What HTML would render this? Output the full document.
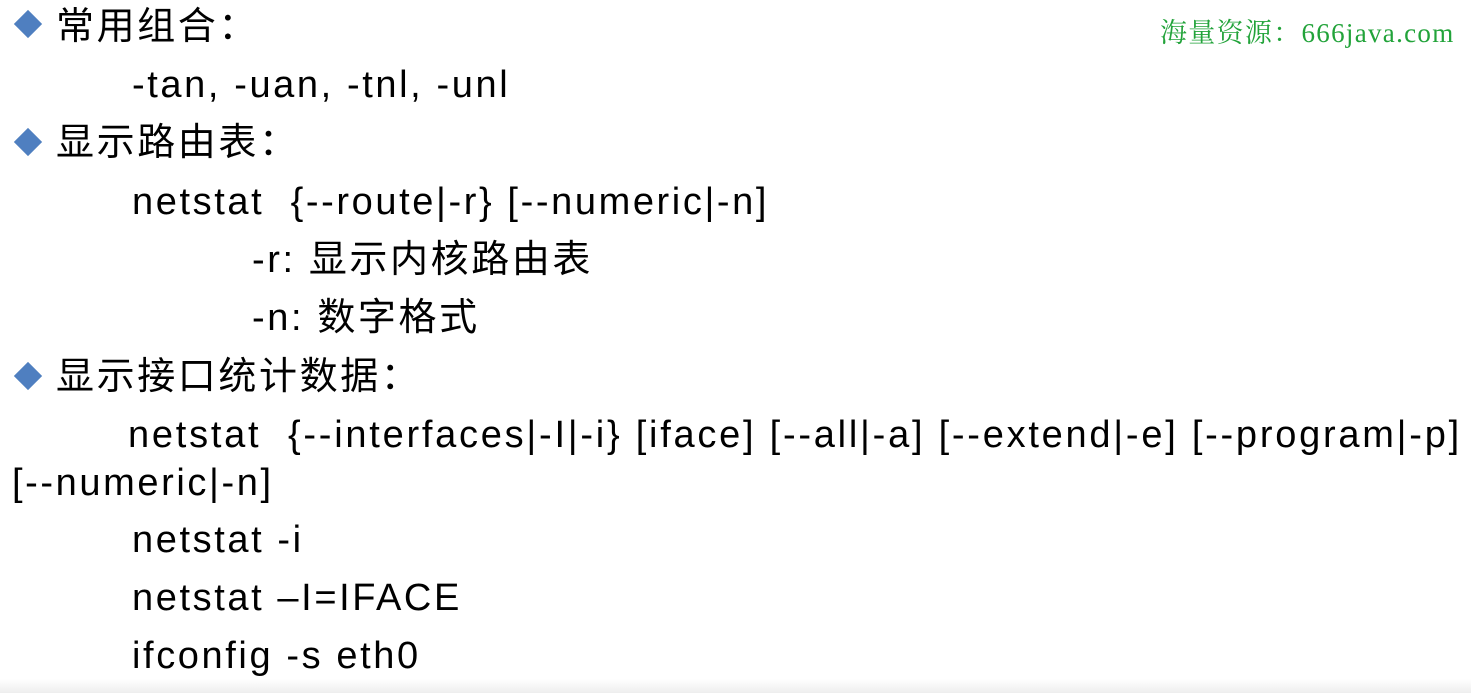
<!DOCTYPE html>
<html><head><meta charset="utf-8"><style>
body{margin:0;width:1471px;height:693px;background:#fff;overflow:hidden;position:relative;font-family:"Liberation Sans","Noto Sans CJK SC",sans-serif;color:#000}
.l{position:absolute;font-size:38px;line-height:40px;white-space:nowrap;letter-spacing:2.6px}
.c{font-size:38px;letter-spacing:2.6px}
.d{position:absolute;width:20px;height:20px;background:#4f7fc0;transform:rotate(45deg)}
.w{position:absolute;left:1160px;top:11px;font-family:"Liberation Serif","Noto Serif CJK SC",serif;color:#22a33a;font-size:27px;letter-spacing:1.3px}
.b{position:absolute;left:0;right:0;bottom:0;height:14px;background:linear-gradient(#fff,#eee)}
</style></head><body>
<div class="d" style="left:18px;top:14px"></div>
<div class="l c" style="left:56px;top:7px">常用组合：</div>
<div class="l" style="left:132px;top:65px">-tan, -uan, -tnl, -unl</div>
<div class="d" style="left:18px;top:132px"></div>
<div class="l c" style="left:56px;top:123px">显示路由表：</div>
<div class="l" style="left:132px;top:182px">netstat&nbsp; {--route|-r} [--numeric|-n]</div>
<div class="l" style="left:252px;top:240px">-r: <span class="c">显示内核路由表</span></div>
<div class="l" style="left:252px;top:298px">-n: <span class="c">数字格式</span></div>
<div class="d" style="left:18px;top:366px"></div>
<div class="l c" style="left:56px;top:357px">显示接口统计数据：</div>
<div class="l" style="left:128px;top:415px;letter-spacing:2.75px">netstat&nbsp; {--interfaces|-I|-i} [iface] [--all|-a] [--extend|-e] [--program|-p]</div>
<div class="l" style="left:12px;top:463px">[--numeric|-n]</div>
<div class="l" style="left:132px;top:520px">netstat -i</div>
<div class="l" style="left:132px;top:578px">netstat –I=IFACE</div>
<div class="l" style="left:132px;top:636px">ifconfig -s eth0</div>
<div class="w">海量资源：666java.com</div>
<div class="b"></div>
</body></html>
